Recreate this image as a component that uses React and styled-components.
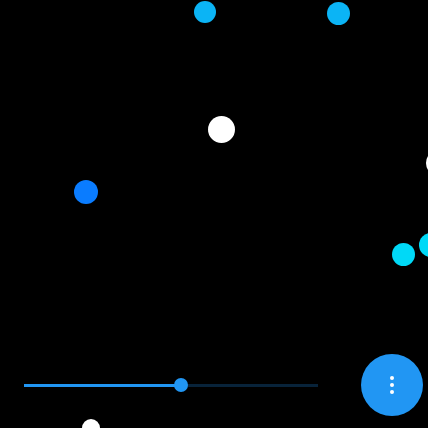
import React from "react";
import styled, { createGlobalStyle } from "styled-components";

const GlobalStyle = createGlobalStyle`
  html, body {
    margin: 0;
    padding: 0;
    background: #000;
    font-family: "Roboto", "Liberation Sans", sans-serif;
  }
`;

const dots = [
  { x: 205, y: 12, r: 11, color: "#0bb4f5" },
  { x: 338, y: 13, r: 11.5, color: "#0bb4f5" },
  { x: 221.5, y: 129.5, r: 13.5, color: "#ffffff" },
  { x: 86, y: 192, r: 12, color: "#0a7cff" },
  { x: 439, y: 163, r: 13, color: "#ffffff" },
  { x: 403, y: 254, r: 11.5, color: "#00d9f7" },
  { x: 431, y: 245, r: 12, color: "#00d9f7" },
  { x: 90.5, y: 427.5, r: 9, color: "#ffffff" },
];

const Stage = styled.div`
  position: relative;
  width: 428px;
  height: 428px;
  overflow: hidden;
  background: #000;
`;

const Dot = styled.div`
  position: absolute;
  border-radius: 50%;
  background: ${(p) => p.$color};
`;

const Controls = styled.div`
  position: absolute;
  left: 0;
  right: 0;
  bottom: 12px;
  display: flex;
  align-items: center;
  gap: 43px;
  padding: 0 5px 0 24px;
`;

const Slider = styled.div`
  position: relative;
  width: 294px;
  height: 3px;
  background: #08233a;
`;

const Fill = styled.div`
  height: 100%;
  background: #2196f3;
`;

const Thumb = styled.div`
  position: absolute;
  top: 50%;
  width: 14px;
  height: 14px;
  margin-left: -7px;
  margin-top: -7px;
  border-radius: 50%;
  background: #2196f3;
`;

const Fab = styled.button`
  width: 62px;
  height: 62px;
  border: 0;
  border-radius: 50%;
  background: #2196f3;
  display: flex;
  align-items: center;
  justify-content: center;
  padding: 0;
  cursor: pointer;
`;

const MenuDots = styled.div`
  display: flex;
  flex-direction: column;
  gap: 3px;

  span {
    width: 4px;
    height: 4px;
    border-radius: 50%;
    background: #fff;
  }
`;

const App = () => {
  const value = 157;

  return (
    <>
      <GlobalStyle />
      <Stage>
        {dots.map((d, i) => (
          <Dot
            key={i}
            $color={d.color}
            style={{
              left: d.x - d.r,
              top: d.y - d.r,
              width: d.r * 2,
              height: d.r * 2,
            }}
          />
        ))}
        <Controls>
          <Slider>
            <Fill style={{ width: value }} />
            <Thumb style={{ left: value }} />
          </Slider>
          <Fab aria-label="menu">
            <MenuDots>
              <span />
              <span />
              <span />
            </MenuDots>
          </Fab>
        </Controls>
      </Stage>
    </>
  );
};

export default App;
